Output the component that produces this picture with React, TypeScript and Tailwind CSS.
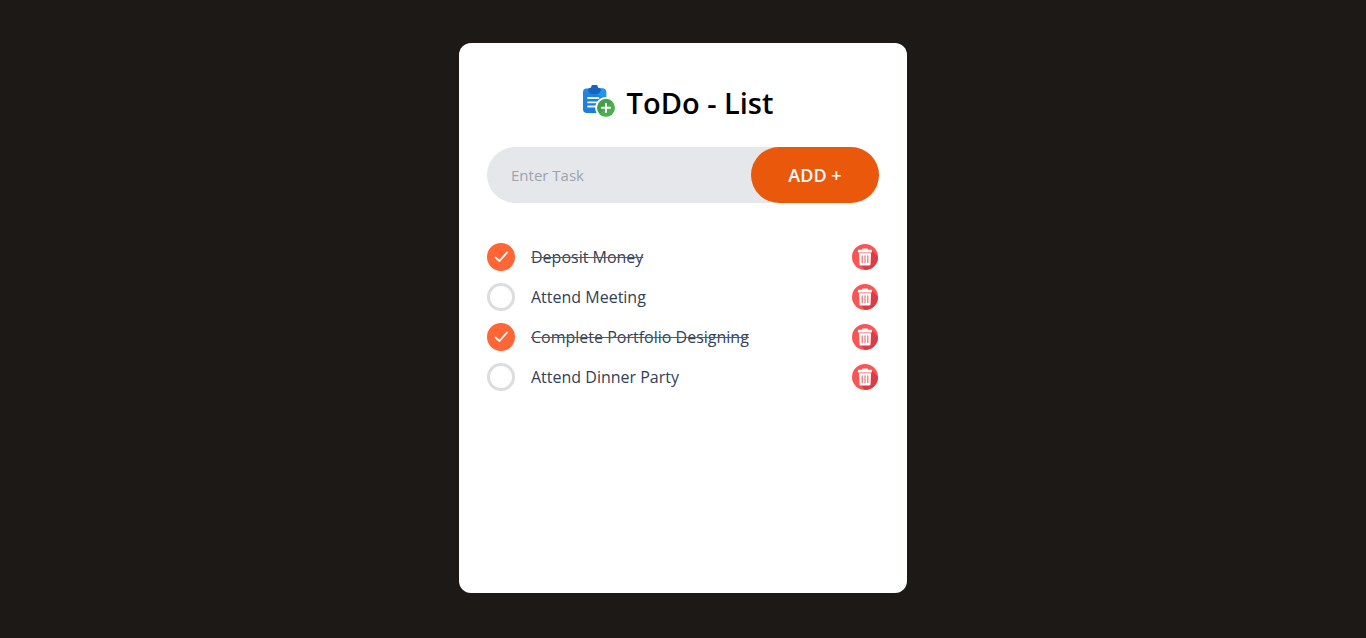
import { useState, type FormEvent } from "react";

type Task = { id: number; text: string; done: boolean };

const initialTasks: Task[] = [
  { id: 1, text: "Deposit Money", done: true },
  { id: 2, text: "Attend Meeting", done: false },
  { id: 3, text: "Complete Portfolio Designing", done: true },
  { id: 4, text: "Attend Dinner Party", done: false },
];

function ClipboardIcon() {
  return (
    <svg viewBox="0 0 32 32" className="size-8 shrink-0" aria-hidden="true">
      <defs>
        <linearGradient id="board" x1="0" y1="0" x2="1" y2="1">
          <stop offset="0" stopColor="#2488e0" />
          <stop offset="1" stopColor="#1976d2" />
        </linearGradient>
        <linearGradient id="plus" x1="0" y1="0" x2="1" y2="1">
          <stop offset="0" stopColor="#43a047" />
          <stop offset="0.5" stopColor="#43a047" />
          <stop offset="0.5" stopColor="#4caf50" />
          <stop offset="1" stopColor="#4caf50" />
        </linearGradient>
      </defs>
      <path d="M3.500 3.500h16A3.500 3.500 0 0 1 23.200 7v17.500a3.500 3.500 0 0 1-3.500 3.500h-16A3.500 3.500 0 0 1 0 24.500V7A3.500 3.500 0 0 1 3.500 3.500Z" fill="url(#board)" />
      <path d="M14 3.500h5.700A3.500 3.500 0 0 1 23.200 7v9L14 9Z" fill="#2196f3" />
      <path d="M7 2.800H8a3.500 3.500 0 0 1 7 0h1a2.200 2.200 0 0 1 2 2.200a1.500 1.500 0 0 1-.800 1.500A3 3 0 0 1 14.500 9h-6A3 3 0 0 1 5.800 6.500A1.500 1.500 0 0 1 5 5a2.200 2.200 0 0 1 2-2.200Z" fill="#1565c0" />
      <path d="M5 13h10.500M5 17.300h9M5 21.500h8" stroke="#e4f0fb" strokeWidth="1.800" strokeLinecap="round" />
      <circle cx="23" cy="22.800" r="10.800" fill="#fff" />
      <circle cx="23" cy="22.800" r="9" fill="url(#plus)" />
      <path d="M23 18.700v8.200M18.900 22.800h8.200" stroke="#fff" strokeWidth="2" strokeLinecap="round" />
    </svg>
  );
}

function TrashIcon() {
  return (
    <svg viewBox="0 0 28 28" className="size-7" aria-hidden="true">
      <defs>
        <clipPath id="disc">
          <circle cx="14" cy="14" r="13" />
        </clipPath>
      </defs>
      <circle cx="14" cy="14" r="13" fill="#fa5555" />
      <path d="M21 7.500 30 16.500V30H17L9.500 22Z" fill="#dc3c46" clipPath="url(#disc)" />
      <path d="M11 6.800V6.200a.800.800 0 0 1 .800-.800h4.400a.800.800 0 0 1 .800.800V6.800H20.200a.800.800 0 0 1 .800.800V9.600H7V7.600A.800.800 0 0 1 7.800 6.800Z" fill="#fff" />
      <path d="M8 10.200h12l-.500 11.300a1.200 1.200 0 0 1-1.200 1.100H9.700a1.200 1.200 0 0 1-1.200-1.100Z" fill="#fff" />
      <path d="M11.200 12.800v7M14 12.800v7M16.800 12.800v7" stroke="#f0656a" strokeWidth="1.100" strokeLinecap="round" />
    </svg>
  );
}

function TaskRow({ task, onToggle, onDelete }: { task: Task; onToggle: () => void; onDelete: () => void }) {
  return (
    <li className="flex items-center">
      <label className="flex flex-1 cursor-pointer items-center gap-4">
        <span className="relative flex size-7 shrink-0">
          <input
            type="checkbox"
            checked={task.done}
            onChange={onToggle}
            className="size-7 cursor-pointer appearance-none rounded-full border-[3px] border-[#dddddd] bg-white checked:border-[#ff6636] checked:bg-[#ff6636]"
          />
          {task.done && (
            <svg viewBox="0 0 28 28" className="pointer-events-none absolute inset-0 size-7" aria-hidden="true">
              <path d="M8.500 14.500 12.500 18 20 9.500" fill="none" stroke="#fff" strokeWidth="1.800" strokeLinecap="round" strokeLinejoin="round" />
            </svg>
          )}
        </span>
        <span className={task.done ? "text-base leading-7 line-through decoration-[#475d7e]" : "text-base leading-7"}>
          {task.text}
        </span>
      </label>
      <button type="button" onClick={onDelete} aria-label={`Delete ${task.text}`} className="cursor-pointer">
        <TrashIcon />
      </button>
    </li>
  );
}

export default function App() {
  const [tasks, setTasks] = useState<Task[]>(initialTasks);
  const [draft, setDraft] = useState("");

  const addTask = (event: FormEvent) => {
    event.preventDefault();
    const text = draft.trim();
    if (!text) return;
    setTasks([...tasks, { id: Date.now(), text, done: false }]);
    setDraft("");
  };

  return (
    <div className="grid min-h-screen bg-[#1c1917] pt-3.5 pb-4 font-['Segoe_UI','Open_Sans',sans-serif]">
      <main className="flex min-h-[550px] w-11/12 max-w-md flex-col place-self-center rounded-xl bg-white p-7">
        <header className="mt-3 flex items-center justify-center gap-3 pr-2.5">
          <ClipboardIcon />
          <h1 className="pt-1 text-[29px] leading-8 font-semibold text-black">ToDo - List</h1>
        </header>
        <form onSubmit={addTask} className="my-7 flex items-center rounded-full bg-[#e5e7eb]">
          <input
            type="text"
            aria-label="Task"
            placeholder="Enter Task"
            value={draft}
            onChange={(event) => setDraft(event.target.value)}
            className="h-14 min-w-0 flex-1 bg-transparent pr-2 pl-6 text-[15px] text-slate-600 outline-none placeholder:text-[#9ca3af]"
          />
          <button type="submit" className="h-14 w-32 cursor-pointer rounded-full bg-[#ea580c] text-lg font-semibold text-white">
            ADD +
          </button>
        </form>
        <ul className="mt-3 flex flex-col gap-3 text-[#334155]">
          {tasks.map((task) => (
            <TaskRow
              key={task.id}
              task={task}
              onToggle={() => setTasks(tasks.map((t) => (t.id === task.id ? { ...t, done: !t.done } : t)))}
              onDelete={() => setTasks(tasks.filter((t) => t.id !== task.id))}
            />
          ))}
        </ul>
      </main>
    </div>
  );
}
